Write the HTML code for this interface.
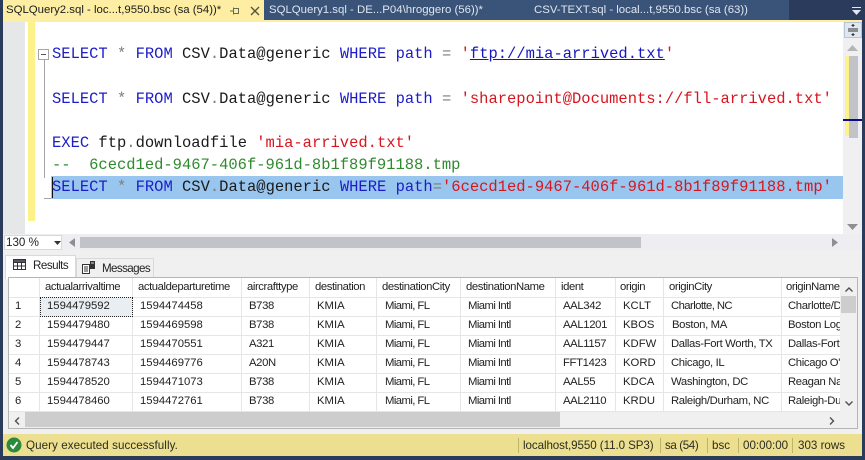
<!DOCTYPE html>
<html><head><meta charset="utf-8"><style>
html,body{margin:0;padding:0}
body{width:865px;height:460px;overflow:hidden;background:#2a3b5c;position:relative;font-family:"Liberation Sans",sans-serif}
.a{position:absolute}
.t{position:absolute;white-space:nowrap}
.c{position:absolute;white-space:pre;font:15.47px/22px "Liberation Mono",monospace;color:#1a1a1a;left:52px}
.k{color:#1c1cc8}.g{color:#7c7c7c}.s{color:#d8151f}
.tab{position:absolute;top:0;height:20px;font-size:11.4px;line-height:20px;white-space:nowrap;color:#dfe6f0}
.h{position:absolute;top:278px;height:19px;font-size:11.3px;line-height:19px;color:#222;white-space:nowrap;letter-spacing:-.42px}
.d{position:absolute;font-size:11.3px;line-height:19px;color:#222;white-space:nowrap}
.i{letter-spacing:-.35px}
.m{letter-spacing:-.57px}
.vl{position:absolute;top:278px;height:134px;width:1px;background:#e6e6e6}
.hl{position:absolute;left:9px;width:831px;height:1px;background:#e6e6e6}
.st{position:absolute;top:434px;height:22px;line-height:23px;font-size:11.6px;color:#2c2c20;white-space:nowrap}
.sp{position:absolute;top:438px;height:15px;width:1px;background:#bdb56c}
.o{left:788px;width:52px;overflow:hidden;letter-spacing:-.35px}
</style></head><body>
<!-- tab strip -->
<div class="a" style="left:0;top:0;width:865px;height:22px;background:#2a3b5c"></div>
<div class="a" style="left:3px;top:0;width:261px;height:22px;background:#fdeea3"></div>
<div class="a" style="left:264px;top:0;width:230px;height:20px;background:#3a5379"></div>
<div class="a" style="left:494px;top:0;width:295px;height:20px;background:#3a5379"></div>
<div class="tab" style="left:6px;color:#1c1c1c">SQLQuery2.sql - loc...t,9550.bsc (sa (54))*</div>
<svg class="a" style="left:230px;top:5px" width="30" height="12" viewBox="0 0 30 12"><path d="M0 6h3M3.500 2.500v7M3.500 3.500h5v5h-5" fill="none" stroke="#6a6a50" stroke-width="1"/><path d="M21 2l8 8M29 2l-8 8" fill="none" stroke="#55553f" stroke-width="1.400"/></svg>
<div class="tab" style="left:269px">SQLQuery1.sql - DE...P04\hroggero (56))*</div>
<div class="tab" style="left:534px">CSV-TEXT.sql - local...t,9550.bsc (sa (63))</div>
<svg class="a" style="left:851px;top:7px" width="11" height="8" viewBox="0 0 11 8"><path d="M1 0h9v1H1zM1 3h9L5.500 8z" fill="#e4e8f0"/></svg>
<!-- editor -->
<div class="a" style="left:3px;top:20px;width:859px;height:2px;background:#fdeea3"></div>
<div class="a" style="left:3px;top:22px;width:840px;height:212px;background:#fff"></div>
<div class="a" style="left:3px;top:22px;width:22px;height:212px;background:#e6e7e8"></div>
<div class="a" style="left:28px;top:22px;width:7px;height:199px;background:#fdf18a"></div>
<div class="a" style="left:44px;top:60px;width:1px;height:118px;background:#a5a5a5"></div>
<div class="a" style="left:44px;top:198px;width:7px;height:1px;background:#a5a5a5"></div>
<div class="a" style="left:38px;top:49px;width:11px;height:11px;box-sizing:border-box;border:1px solid #a5a5a5;background:#fff"></div>
<div class="a" style="left:41px;top:54px;width:5px;height:1px;background:#555"></div>
<div class="a" style="left:51px;top:176px;width:792px;height:23px;background:#99c6ee"></div>
<div class="a" style="left:52px;top:177px;width:1px;height:21px;background:#111"></div>
<div class="c" style="top:43px"><span class="k">SELECT</span> <span class="g">*</span> <span class="k">FROM</span> CSV<span class="g">.</span>Data@generic <span class="k">WHERE</span> <span class="k">path</span> <span class="g">=</span> <span class="s">'</span><span style="color:#1717c0;text-decoration:underline">ftp://mia-arrived.txt</span><span class="s">'</span></div>
<div class="c" style="top:88px"><span class="k">SELECT</span> <span class="g">*</span> <span class="k">FROM</span> CSV<span class="g">.</span>Data@generic <span class="k">WHERE</span> <span class="k">path</span> <span class="g">=</span> <span class="s">'sharepoint@Documents://fll-arrived.txt'</span></div>
<div class="c" style="top:132px"><span class="k">EXEC</span> ftp<span class="g">.</span>downloadfile <span class="s">'mia-arrived.txt'</span></div>
<div class="c" style="top:154px;color:#2f8a2f">--  6cecd1ed-9467-406f-961d-8b1f89f91188.tmp</div>
<div class="c" style="top:176px"><span class="k">SELECT</span> <span class="g">*</span> <span class="k">FROM</span> CSV<span class="g">.</span>Data@generic <span class="k">WHERE</span> <span class="k">path</span><span class="g">=</span><span class="s">'6cecd1ed-9467-406f-961d-8b1f89f91188.tmp'</span></div>
<!-- editor vertical scrollbar -->
<div class="a" style="left:843px;top:22px;width:19px;height:212px;background:#f0f0f2"></div>
<div class="a" style="left:844px;top:22px;width:18px;height:16px;background:#dfe7f0;border:1px solid #b8c4d4;box-sizing:border-box"></div>
<svg class="a" style="left:847px;top:23px" width="12" height="14" viewBox="0 0 12 14"><path d="M1 6h10M1 8h10M6 1v3M6 10v3" stroke="#333" fill="none"/><path d="M4 3l2-2 2 2zM4 11l2 2 2-2z" fill="#333"/></svg>
<svg class="a" style="left:847px;top:45px" width="11" height="6" viewBox="0 0 11 6"><path d="M0 6L5.500 0 11 6z" fill="#b5b5b5"/></svg>
<svg class="a" style="left:847px;top:224px" width="11" height="6" viewBox="0 0 11 6"><path d="M0 0L5.500 6 11 0z" fill="#8f8f93"/></svg>
<div class="a" style="left:849px;top:56px;width:9px;height:82px;background:#c2c3c9"></div>
<div class="a" style="left:845px;top:56px;width:4px;height:80px;background:#fdf18a"></div>
<div class="a" style="left:843px;top:119px;width:19px;height:2px;background:#0a0a8a"></div>
<!-- zoom + h scrollbar -->
<div class="a" style="left:3px;top:234px;width:859px;height:22px;background:#eeeef2"></div>
<div class="a" style="left:4px;top:235px;width:58px;height:15px;background:#fff;box-sizing:border-box;border:1px solid #d8d8d8"></div>
<div class="t" style="left:6px;top:235px;font-size:11.6px;line-height:16px;color:#222">130 %</div>
<svg class="a" style="left:54px;top:241px" width="7" height="4" viewBox="0 0 7 4"><path d="M0 0h7L3.500 4z" fill="#333"/></svg>
<svg class="a" style="left:69px;top:238px" width="6" height="9" viewBox="0 0 6 9"><path d="M6 0v9L0 4.500z" fill="#8f8f93"/></svg>
<div class="a" style="left:80px;top:237px;width:561px;height:11px;background:#c2c3c9"></div>
<svg class="a" style="left:832px;top:238px" width="6" height="9" viewBox="0 0 6 9"><path d="M0 0v9l6-4.500z" fill="#8f8f93"/></svg>
<!-- results panel -->
<div class="a" style="left:3px;top:250px;width:859px;height:184px;background:#f0f0f0"></div>
<div class="a" style="left:5px;top:255px;width:71px;height:24px;background:#fff;border:1px solid #d9d9d9;border-bottom:0;box-sizing:border-box"></div>
<div class="a" style="left:76px;top:258px;width:78px;height:20px;background:#f0f0f0;border:1px solid #d9d9d9;border-bottom:0;box-sizing:border-box"></div>
<svg class="a" style="left:13px;top:259px" width="13" height="12" viewBox="0 0 13 12"><path d="M.5.500h12v10H.500zM.5 3.500h12M.5 7h12M4.500 .5v10M8.500 .5v10" fill="#fff" stroke="#333"/><rect x="1" y="1" width="11" height="2" fill="#556"/></svg>
<div class="t" style="left:33px;top:256px;font-size:11.6px;line-height:19px;color:#222;letter-spacing:-.5px">Results</div>
<svg class="a" style="left:81px;top:260px" width="15" height="14" viewBox="0 0 15 14"><path d="M1.500 4.500h7v9h-7zM3 7h4M3 9h4M3 11h4" fill="#fff" stroke="#333"/><rect x="9" y="1" width="5" height="8" fill="#333"/><path d="M10 3h3" stroke="#ddd"/></svg>
<div class="t" style="left:102px;top:259px;font-size:11.6px;line-height:19px;color:#222;letter-spacing:-.6px">Messages</div>
<!-- grid -->
<div class="a" style="left:8px;top:277px;width:850px;height:152px;background:#fff;border:1px solid #b5b5b5;box-sizing:border-box"></div>
<div class="vl" style="left:39px"></div><div class="vl" style="left:132px"></div><div class="vl" style="left:241px"></div><div class="vl" style="left:309px"></div><div class="vl" style="left:376px"></div><div class="vl" style="left:460px"></div><div class="vl" style="left:555px"></div><div class="vl" style="left:615px"></div><div class="vl" style="left:663px"></div><div class="vl" style="left:781px"></div>
<div class="hl" style="top:297px"></div><div class="hl" style="top:316px"></div><div class="hl" style="top:335px"></div><div class="hl" style="top:354px"></div><div class="hl" style="top:373px"></div><div class="hl" style="top:392px"></div><div class="hl" style="top:411px"></div>
<div class="a" style="left:40px;top:297px;width:93px;height:20px;background:#e9eef2;border:1px dotted #222;box-sizing:border-box"></div>
<div class="h" style="left:45px">actualarrivaltime</div><div class="h" style="left:138px">actualdeparturetime</div><div class="h" style="left:247px">aircrafttype</div><div class="h" style="left:315px">destination</div><div class="h" style="left:382px">destinationCity</div><div class="h" style="left:466px">destinationName</div><div class="h" style="left:561px">ident</div><div class="h" style="left:620px">origin</div><div class="h" style="left:669px">originCity</div><div class="h" style="left:786px;width:54px;overflow:hidden">originName</div>

<div class="d" style="left:15px;top:297px">1</div><div class="d" style="left:47px;top:297px">1594479592</div><div class="d" style="left:140px;top:297px">1594474458</div><div class="d i" style="left:249px;top:297px">B738</div><div class="d" style="left:317px;top:297px">KMIA</div><div class="d m" style="left:385px;top:297px">Miami, FL</div><div class="d m" style="left:468px;top:297px">Miami Intl</div><div class="d i" style="left:563px;top:297px">AAL342</div><div class="d" style="left:623px;top:297px">KCLT</div><div class="d m" style="left:671px;top:297px">Charlotte, NC</div><div class="d o" style="top:297px">Charlotte/Douglas</div>
<div class="d" style="left:15px;top:316px">2</div><div class="d" style="left:47px;top:316px">1594479480</div><div class="d" style="left:140px;top:316px">1594469598</div><div class="d i" style="left:249px;top:316px">B738</div><div class="d" style="left:317px;top:316px">KMIA</div><div class="d m" style="left:385px;top:316px">Miami, FL</div><div class="d m" style="left:468px;top:316px">Miami Intl</div><div class="d i" style="left:563px;top:316px">AAL1201</div><div class="d" style="left:623px;top:316px">KBOS</div><div class="d i" style="left:672px;top:316px">Boston, MA</div><div class="d o" style="top:316px">Boston Logan</div>
<div class="d" style="left:15px;top:335px">3</div><div class="d" style="left:47px;top:335px">1594479447</div><div class="d" style="left:140px;top:335px">1594470551</div><div class="d i" style="left:249px;top:335px">A321</div><div class="d" style="left:317px;top:335px">KMIA</div><div class="d m" style="left:385px;top:335px">Miami, FL</div><div class="d m" style="left:468px;top:335px">Miami Intl</div><div class="d i" style="left:563px;top:335px">AAL1157</div><div class="d" style="left:623px;top:335px">KDFW</div><div class="d i" style="left:671px;top:335px">Dallas-Fort Worth, TX</div><div class="d o" style="top:335px">Dallas-Fort Worth</div>
<div class="d" style="left:15px;top:354px">4</div><div class="d" style="left:47px;top:354px">1594478743</div><div class="d" style="left:140px;top:354px">1594469776</div><div class="d i" style="left:249px;top:354px">A20N</div><div class="d" style="left:317px;top:354px">KMIA</div><div class="d m" style="left:385px;top:354px">Miami, FL</div><div class="d m" style="left:468px;top:354px">Miami Intl</div><div class="d i" style="left:563px;top:354px">FFT1423</div><div class="d" style="left:623px;top:354px">KORD</div><div class="d i" style="left:671px;top:354px">Chicago, IL</div><div class="d o" style="top:354px">Chicago O'Hare</div>
<div class="d" style="left:15px;top:373px">5</div><div class="d" style="left:47px;top:373px">1594478520</div><div class="d" style="left:140px;top:373px">1594471073</div><div class="d i" style="left:249px;top:373px">B738</div><div class="d" style="left:317px;top:373px">KMIA</div><div class="d m" style="left:385px;top:373px">Miami, FL</div><div class="d m" style="left:468px;top:373px">Miami Intl</div><div class="d i" style="left:563px;top:373px">AAL55</div><div class="d" style="left:623px;top:373px">KDCA</div><div class="d i" style="left:671px;top:373px">Washington, DC</div><div class="d o" style="top:373px">Reagan National</div>
<div class="d" style="left:15px;top:392px">6</div><div class="d" style="left:47px;top:392px">1594478460</div><div class="d" style="left:140px;top:392px">1594472761</div><div class="d i" style="left:249px;top:392px">B738</div><div class="d" style="left:317px;top:392px">KMIA</div><div class="d m" style="left:385px;top:392px">Miami, FL</div><div class="d m" style="left:468px;top:392px">Miami Intl</div><div class="d i" style="left:563px;top:392px">AAL2110</div><div class="d" style="left:623px;top:392px">KRDU</div><div class="d i" style="left:671px;top:392px">Raleigh/Durham, NC</div><div class="d o" style="top:392px">Raleigh-Durham</div>

<!-- grid scrollbars -->
<div class="a" style="left:840px;top:278px;width:17px;height:150px;background:#f0f0f0"></div>
<div class="a" style="left:841px;top:296px;width:15px;height:17px;background:#cdcdcd"></div>
<svg class="a" style="left:845px;top:287px" width="8" height="5" viewBox="0 0 8 5"><path d="M.5 4.500L4 1l3.500 3.500" fill="none" stroke="#505050" stroke-width="1.400"/></svg>
<svg class="a" style="left:845px;top:401px" width="8" height="5" viewBox="0 0 8 5"><path d="M.5.500L4 4 7.500.5" fill="none" stroke="#505050" stroke-width="1.400"/></svg>
<div class="a" style="left:9px;top:412px;width:831px;height:16px;background:#f0f0f0"></div>
<div class="a" style="left:25px;top:412px;width:535px;height:15px;background:#cdcdcd"></div>
<svg class="a" style="left:14px;top:417px" width="6" height="8" viewBox="0 0 6 8"><path d="M5 .5L1.500 4 5 7.500" fill="none" stroke="#505050" stroke-width="1.400"/></svg>
<svg class="a" style="left:829px;top:417px" width="6" height="8" viewBox="0 0 6 8"><path d="M1 .5L4.500 4 1 7.500" fill="none" stroke="#505050" stroke-width="1.400"/></svg>
<!-- status bar -->
<div class="a" style="left:3px;top:434px;width:859px;height:22px;background:#ecdf8f"></div>
<svg class="a" style="left:6px;top:437px" width="16" height="16" viewBox="0 0 16 16"><circle cx="8" cy="8" r="7.500" fill="#2d8a3c"/><path d="M4.500 8l2.500 3 4.500-6" fill="none" stroke="#fff" stroke-width="1.800"/></svg>
<div class="st" style="left:26px;letter-spacing:.07px">Query executed successfully.</div>
<div class="sp" style="left:518px"></div><div class="st" style="left:523px;letter-spacing:-.08px">localhost,9550 (11.0 SP3)</div>
<div class="sp" style="left:660px"></div><div class="st" style="left:665px;letter-spacing:-.4px">sa (54)</div>
<div class="sp" style="left:707px"></div><div class="st" style="left:712px">bsc</div>
<div class="sp" style="left:738px"></div><div class="st" style="left:743px">00:00:00</div>
<div class="sp" style="left:792px"></div><div class="st" style="left:798px">303 rows</div>
</body></html>
